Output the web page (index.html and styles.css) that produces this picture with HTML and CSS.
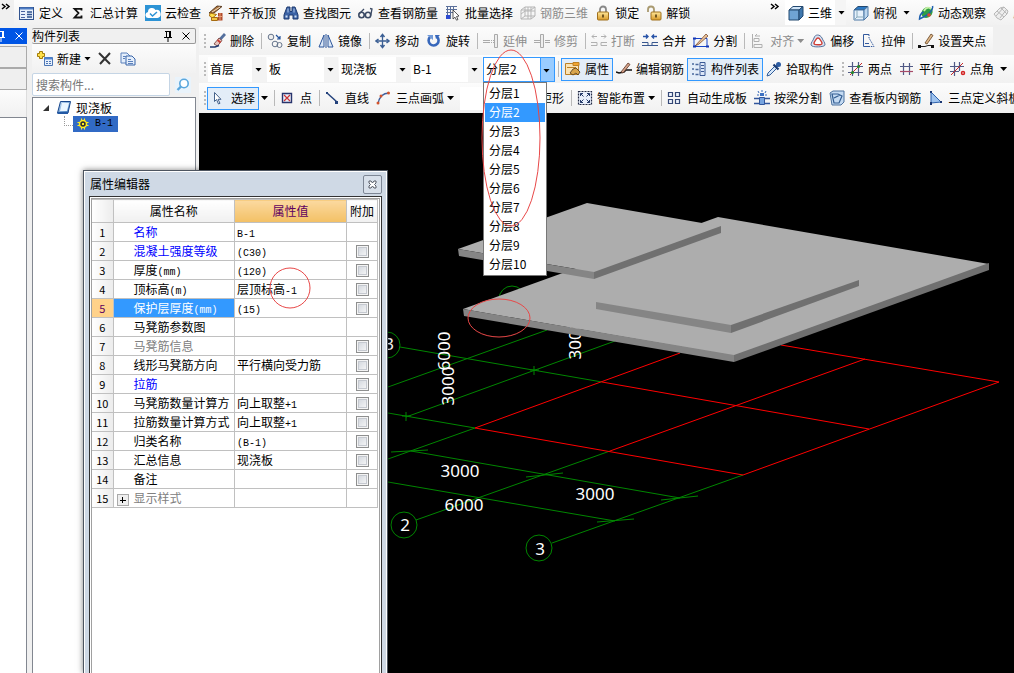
FILE: index.html
```html
<!DOCTYPE html>
<html lang="zh-CN">

<head>
  <title>现浇板 B-1</title>
  <meta charset="utf-8" />
  <meta name="viewport" content="width=device-width, initial-scale=1.0" />
  <link rel="stylesheet" href="styles.css">
</head>

<body>
  <!-- icon set, 16x16 -->
  <svg class="defs" width="0" height="0" aria-hidden="true">
    <defs>
      <linearGradient id="gblue" x1="0" y1="0" x2="1" y2="1"><stop offset="0" stop-color="#d4e8fb"/><stop offset="1" stop-color="#2f6fb5"/></linearGradient>
      <linearGradient id="ggold" x1="0" y1="0" x2="0" y2="1"><stop offset="0" stop-color="#ffe79a"/><stop offset="1" stop-color="#d99a28"/></linearGradient>
    </defs>
    <symbol id="i-define" viewBox="0 0 16 16"><rect x=".5" y="2.500" width="14" height="12" fill="#eaf1fb" stroke="#31538f"/><path d="M1 3.500h13" stroke="#4d7cc4" stroke-width="2"/><path d="M2 6.500h4M2 9.500h4M2 12.500h4" stroke="#4a62a0"/><path d="M8 7h5M8 9.500h5M8 12h5" stroke="#31538f" stroke-width="1.500"/></symbol>
    <symbol id="i-sum" viewBox="0 0 16 16"><path d="M11.500 5.500V3.800H4.500L8.500 8l-4 4.500h7V10.500" fill="none" stroke="#111" stroke-width="1.800"/></symbol>
    <symbol id="i-cloud" viewBox="0 0 16 16"><rect width="16" height="16" fill="#2c93d5"/><path d="M4 13a3 3 0 0 1-1-6 4 4 0 0 1 7.500-2A3.500 3.500 0 0 1 12.500 13z" fill="#fff"/><path d="M5 8.500l2.500 2.500L12 7" fill="none" stroke="#2c93d5" stroke-width="1.500"/></symbol>
    <symbol id="i-flush" viewBox="0 0 16 16"><path d="M1 8l8-7 5 .5L6 8z" fill="#a9713c" stroke="#5d4026"/><path d="M4 7l8-5" stroke="#f0dcc0"/><path d="M2 8l-.5 3 3 2 4-3.500z" fill="#ffe04a" stroke="#a66b10"/><path d="M3.500 12.500h6v3h-6z" fill="#f4c545" stroke="#a66b10"/><path d="M10 8h4.500v7.500H10z" fill="#b04a2a"/><path d="M12 8v7.500M10 11.500h4.500" stroke="#e7a078"/></symbol>
    <symbol id="i-find" viewBox="0 0 16 16"><path d="M4 2h3v4l1 1 1-1V2h3l3 8v4h-5v-4H6v4H1v-4z" fill="#3b62a5" stroke="#1f3b70"/><path d="M2.500 10.500h2v2h-2zM11.500 10.500h2v2h-2z" fill="#cfe0f6"/><path d="M5 3.500v4M11 3.500v4" stroke="#b8cff0"/></symbol>
    <symbol id="i-glasses" viewBox="0 0 16 16"><circle cx="3.500" cy="10" r="2.700" fill="none" stroke="#3b4a64" stroke-width="1.600"/><circle cx="10" cy="10" r="2.700" fill="none" stroke="#3b4a64" stroke-width="1.600"/><path d="M6 9.500h1.500M12.700 10.500L14 4l-2-.5M1 9l5-5" fill="none" stroke="#3b4a64" stroke-width="1.300"/></symbol>
    <symbol id="i-batch" viewBox="0 0 16 16"><path d="M1 1.500h11M1 4.500h11M1 7.500h7M2.500 1v13M5.500 1v13M8.500 1v6" stroke="#5a6f9a"/><rect x="1" y="10" width="4" height="4" fill="#2c4ad0"/><path d="M8 5l6 6-2.500.5 1.500 3-1.500.7-1.500-3L8 14z" fill="#fff" stroke="#333" stroke-width=".8"/></symbol>
    <symbol id="i-rebar3d" viewBox="0 0 16 16"><path d="M1 5l4-3v9l-4 3zM5 2h10v9H5M1 14h10l4-3M1 9l4-3h10M8 2v12M11 2v12M1 5h10l4-3" fill="none" stroke="#b5b5b5"/></symbol>
    <symbol id="i-lock" viewBox="0 0 16 16"><path d="M5 7V4.500a3 3 0 0 1 6 0V7" fill="none" stroke="#888" stroke-width="1.800"/><rect x="2.500" y="7" width="11" height="8" rx="1" fill="url(#ggold)" stroke="#a0701c"/><path d="M8 9.500v3" stroke="#513a10" stroke-width="1.600"/></symbol>
    <symbol id="i-unlock" viewBox="0 0 16 16"><path d="M2 7V4.500a3 3 0 0 1 6 0V7" fill="none" stroke="#a99a70" stroke-width="1.800"/><rect x="5" y="7" width="10" height="8" rx="1" fill="url(#ggold)" stroke="#a0701c"/><path d="M10 9.500v3" stroke="#513a10" stroke-width="1.600"/></symbol>
    <symbol id="i-cube" viewBox="0 0 16 16"><path d="M1 5l4-3.500h10L11 5z" fill="#cfe4f8" stroke="#23486f"/><path d="M1 5h10v10H1z" fill="#6fa4d4" stroke="#23486f"/><path d="M11 5l4-3.500V11l-4 4z" fill="#3f77ad" stroke="#23486f"/></symbol>
    <symbol id="i-topview" viewBox="0 0 16 16"><path d="M1 5l4-3.500h10L11 5z" fill="#2b79c4" stroke="#23486f"/><path d="M1 5h10v10H1z" fill="#e6f1fb" stroke="#4c79a6"/><path d="M11 5l4-3.500V11l-4 4z" fill="#bdd7ee" stroke="#4c79a6"/><path d="M4 5v7l-3 3M4 12h7" fill="none" stroke="#8ab"/></symbol>
    <symbol id="i-orbit" viewBox="0 0 16 16"><ellipse cx="9" cy="7.500" rx="6" ry="5" transform="rotate(-40 9 7.500)" fill="#2f9e44"/><path d="M6 6c2-4 5-4 7-2" fill="none" stroke="#c6f0a5" stroke-width="1.800"/><path d="M14.500 1c1 4-4 9-13 13 0-4 2-6 4-7" fill="none" stroke="#1d5fae" stroke-width="1.500"/><circle cx="11" cy="10" r="1.800" fill="#e0492c"/></symbol>
    <symbol id="i-local" viewBox="0 0 16 16"><path d="M1 9l6-6 4-1 4 4-1 3-6 6-4-2zM4 6l7 6M8 3l6 6M7 13l7-9M3 11l8-9" fill="#eee" stroke="#b8b8b8"/></symbol>
    <symbol id="i-erase" viewBox="0 0 16 16"><path d="M15 1L9.500 7" stroke="#54709e" stroke-width="2.800"/><path d="M9 5l3 2.500-4.500 5.500-3.500-2z" fill="#e8c4bd" stroke="#6d3a34" stroke-width=".8"/><path d="M7.500 7l3 2.500" stroke="#c93b31" stroke-width="1.800"/><path d="M0 14h5l4-1.500" fill="none" stroke="#223a70" stroke-width="1.500"/></symbol>
    <symbol id="i-copy" viewBox="0 0 16 16"><circle cx="4" cy="4" r="2.800" fill="#eee" stroke="#66758c"/><circle cx="8" cy="11" r="2.800" fill="none" stroke="#66758c"/><circle cx="12.500" cy="12" r="2.500" fill="none" stroke="#66758c"/><path d="M9 2l4 4m0-3v3h-3" fill="none" stroke="#26549c" stroke-width="1.200"/></symbol>
    <symbol id="i-mirror" viewBox="0 0 16 16"><path d="M6 2v12H1zM10 2v12h5z" fill="#dce8f7" stroke="#2d569b"/><path d="M8 1v14" stroke="#2d569b"/></symbol>
    <symbol id="i-move" viewBox="0 0 16 16"><path d="M7.500 2v12M1 8h13" stroke="#3b5f94" stroke-width="1.300"/><path d="M5.500 4l2-2.500 2 2.500M5.500 12l2 2.500 2-2.500M3.500 6L1 8l2.500 2M11.500 6L14 8l-2.500 2" fill="none" stroke="#3b5f94" stroke-width="1.500"/></symbol>
    <symbol id="i-rotate" viewBox="0 0 16 16"><path d="M4 4a5 5 0 1 0 7-.2" fill="none" stroke="#3767bb" stroke-width="2.600"/><path d="M1 2h6v5z" fill="#7099d8"/><path d="M9 2h5l-4 4z" fill="#3767bb"/></symbol>
    <symbol id="i-extend" viewBox="0 0 16 16"><path d="M0 7.500h7M0 9.500h7" stroke="#aaa"/><path d="M8 7.500h3M8 9.500h3" stroke="#aaa" stroke-dasharray="1"/><path d="M11.500 1.500h3v13h-3z" fill="#eee" stroke="#aaa"/></symbol>
    <symbol id="i-trim" viewBox="0 0 16 16"><path d="M0 7.500h6M0 9.500h6M11 7.500h5M11 9.500h5" stroke="#aaa"/><path d="M6.500 1.500h3v13h-3z" fill="#eee" stroke="#aaa"/></symbol>
    <symbol id="i-break" viewBox="0 0 16 16"><path d="M1 3.500h5M10 3.500h5M3 1.500l-2 2 2 2M13 1.500l2 2-2 2M0 9.500h6v3H0M16 9.500h-6v3h6" fill="none" stroke="#b0b0b0"/></symbol>
    <symbol id="i-merge" viewBox="0 0 16 16"><path d="M1 3.500h5M10 3.500h5M4 1.500l2 2-2 2M12 1.500l-2 2 2 2" fill="none" stroke="#2853a8" stroke-width="1.400"/><path d="M0 9.500h6v3H0M16 9.500h-6v3h6M6 12.500h4" fill="none" stroke="#39588f"/></symbol>
    <symbol id="i-split" viewBox="0 0 16 16"><path d="M1 5.500h13v8H1z" fill="none" stroke="#1745c9"/><path d="M2 13L13 1l2 2L6 11z" fill="#e9c49e" stroke="#7d4d2c" stroke-width=".8"/><path d="M0 4.500h3v2H0zM0 12.500h3v2H0zM13 12.500h3v2h-3z" fill="#1436b5"/></symbol>
    <symbol id="i-align" viewBox="0 0 16 16"><path d="M2.500 1v14M4 5.500h5v3H4zM4 11.500h8v3H4zM10 3L5 3l2-2" fill="none" stroke="#b0b0b0"/></symbol>
    <symbol id="i-offset" viewBox="0 0 16 16"><path d="M1 12c0-3 2-4 3-7 1-4 6-4 8 0 1 3 3 4 3 7 0 2-13 3-14 0z" fill="#d9e5f4" stroke="#58729b"/><path d="M4 10.500c0-2 1-2 2-4s3-2 4 0 2 2 2 4-8 1.500-8 0z" fill="#fff" stroke="#cf3d35" stroke-width="1.400"/></symbol>
    <symbol id="i-stretch" viewBox="0 0 16 16"><path d="M8 1.500H2.500v12H9" fill="none" stroke="#335a9e"/><path d="M8 1.500V5l5 8.500H9" fill="none" stroke="#335a9e" stroke-dasharray="1.500 1"/><path d="M4 10.500h4" stroke="#335a9e"/></symbol>
    <symbol id="i-grip" viewBox="0 0 16 16"><path d="M0 13.500h7l3-1h6" fill="none" stroke="#222"/><path d="M0 12h3v3H0zM13 12h3v3h-3z" fill="#111"/><path d="M7 10l6-9 2 1.500L9 11z" fill="#e0b98a" stroke="#62401f" stroke-width=".8"/></symbol>
    <symbol id="i-prop" viewBox="0 0 16 16"><path d="M.5 2.500h13v11H.5z" fill="#fbe3b4" stroke="#bd8126"/><path d="M8 1.500h6v3H8z" fill="#f2a531" stroke="#bd8126"/><path d="M2 6.500h9" stroke="#bd8126"/><path d="M5 12l3-4 3-1 4 4-2 3-2-2-3 2z" fill="#d9a54c" stroke="#4c3515" stroke-width=".8"/></symbol>
    <symbol id="i-editbar" viewBox="0 0 16 16"><path d="M0 11l3 1 5-1 2-2h6" fill="none" stroke="#111" stroke-width="1.500"/><path d="M5 11l7-9 2 1.500L7 12z" fill="#d5a28a" stroke="#5b3525" stroke-width=".8"/></symbol>
    <symbol id="i-list" viewBox="0 0 16 16"><path d="M1 3h2M1 8h2M1 13h2M4.500 3.500h3M4.500 8.500h3M4.500 13.500h3" stroke="#4a689c" stroke-width="1.500"/><path d="M9 1.500h5v13H9z" fill="#dce7f8" stroke="#3b5a96"/><path d="M10 4.500h3M10 7.500h3M10 10.500h3" stroke="#3b5a96"/></symbol>
    <symbol id="i-pick" viewBox="0 0 16 16"><path d="M9 5L2 12l-1 3 3-1 7-7z" fill="#d7e8fa" stroke="#315c98"/><path d="M7.500 3.500l5 5M10 6l3-3" stroke="#1c3c74" stroke-width="2.200"/><circle cx="12.500" cy="3.500" r="2.500" fill="#2e5da3"/></symbol>
    <symbol id="i-twopt" viewBox="0 0 16 16"><path d="M4.500 1v14M10.500 1v14M0 5.500h15M0 11.500h15" stroke="#515a86" stroke-width="1.200"/><path d="M2 14L14 2" stroke="#c82828"/><circle cx="4.500" cy="11.500" r="1.500" fill="#218d2b"/><circle cx="10.500" cy="5.500" r="1.500" fill="#218d2b"/></symbol>
    <symbol id="i-para" viewBox="0 0 16 16"><path d="M4.500 2v12M10.500 2v12M1 5.500h13" stroke="#515a86" stroke-width="1.200"/><path d="M1 10.500h13" stroke="#a84b68" stroke-width="1.200"/></symbol>
    <symbol id="i-angle" viewBox="0 0 16 16"><path d="M4.500 1v14M9.500 1v9M0 5.500h14M0 10.500h9" stroke="#515a86" stroke-width="1.200"/><path d="M1 14L13 2" stroke="#c82828"/><circle cx="13" cy="12" r="1.500" fill="none" stroke="#d32323" stroke-width="1.500"/></symbol>
    <symbol id="i-arrow" viewBox="0 0 16 16"><path d="M3.500 2.500v9l2-2 2 4.500 1.500-.7-2-4h3z" fill="#fff" stroke="#46638c"/></symbol>
    <symbol id="i-point" viewBox="0 0 16 16"><path d="M2.500 3.500h9v9h-9z" fill="#e8effc" stroke="#28346c" stroke-width="1.400"/><path d="M4 5l6 6M10 5l-6 6" stroke="#cc3434" stroke-width="1.200"/></symbol>
    <symbol id="i-line" viewBox="0 0 16 16"><path d="M2 3l10 9" stroke="#24427c" stroke-width="1.500"/><path d="M1 2h2v2H1zM10 11h3v3h-3z" fill="#24427c"/></symbol>
    <symbol id="i-arc" viewBox="0 0 16 16"><path d="M2 14C3 8 6 3 13 3" fill="none" stroke="#3e5f9d" stroke-width="1.300"/><circle cx="2" cy="13" r="1.500" fill="#d2542d"/><circle cx="5" cy="6" r="1.500" fill="#d2542d"/><circle cx="12.500" cy="3" r="1.500" fill="#d2542d"/></symbol>
    <symbol id="i-rect" viewBox="0 0 16 16"><path d="M2 4h12v8H2z" fill="#e8effc" stroke="#28346c"/></symbol>
    <symbol id="i-smart" viewBox="0 0 16 16"><path d="M1.500 1.500h13v13h-13z" fill="#e8effc" stroke="#222a44" stroke-width="1.200" stroke-dasharray="2 1"/><path d="M6.500 6.500l-3-3M9.500 6.500l3-3M6.500 9.500l-3 3M9.500 9.500l3 3M3.500 6V3.500H6M10 3.500h2.500V6M3.500 10v2.500H6M10 12.500h2.500V10" fill="none" stroke="#233968"/></symbol>
    <symbol id="i-autoslab" viewBox="0 0 16 16"><path d="M1.500 2.500h4v4h-4zM8.500 2.500h4v4h-4zM1.500 9.500h4v4h-4zM8.500 9.500h4v4h-4z" fill="#edf3fd" stroke="#334675" stroke-width="1.200"/></symbol>
    <symbol id="i-beam" viewBox="0 0 16 16"><path d="M0 8.500h6M10 8.500h6M0 13.500h6M10 13.500h6" stroke="#31569c" stroke-width="1.500"/><path d="M5.500 7.500h5v7h-5z" fill="#77a4df" stroke="#31569c"/><path d="M8 0v2M4 1l1 2M12 1l-1 2M3 5h2M11 5h2" stroke="#3769b9"/><path d="M6 3h4v3H6z" fill="#3d71c2"/></symbol>
    <symbol id="i-viewbar" viewBox="0 0 16 16"><path d="M1 3l3-2h11v11l-3 3H3z" fill="#c4daf2" stroke="#4b719e"/><path d="M3 4l2 9h5l3-7-4-2zM5 8l6-3" fill="none" stroke="#335d91" stroke-width="1.200"/></symbol>
    <symbol id="i-slope" viewBox="0 0 16 16"><path d="M3 2v11l10-1z" fill="#9fc3ee" stroke="#2d62ad"/><path d="M2 1h2v2H2zM2 12h2v3H2zM12 11h2v2h-2z" fill="#1b3773"/></symbol>
    <symbol id="i-new" viewBox="0 0 16 16"><path d="M2.500.5h3v2h2v3h-2v2h-3v-2h-2v-3h2z" fill="#ffe04a" stroke="#a37c0a"/><path d="M7.500 6.500h8v8h-8z" fill="#e7f0fc" stroke="#4d76b4"/><path d="M7.500 7.500h8" stroke="#4d82d1" stroke-width="2"/><path d="M9 10.500h2M12 10.500h2M9 12.500h2M12 12.500h2" stroke="#4d76b4"/></symbol>
    <symbol id="i-del" viewBox="0 0 16 16"><path d="M2 2l11 11M13 2L3 13" stroke="#333" stroke-width="2"/></symbol>
    <symbol id="i-dup" viewBox="0 0 16 16"><path d="M1 2h6l3 3v7H1z" fill="#e4eefb" stroke="#5b80bb"/><path d="M6 5h6l3 3v6H6z" fill="#e4eefb" stroke="#3864a8"/><path d="M8 8.500h3M8 10.500h5M8 12.500h5M3 5.500h3M3 7.500h2" stroke="#5b80bb"/></symbol>
    <symbol id="i-search" viewBox="0 0 16 16"><rect width="16" height="16" fill="#e9f3fb"/><circle cx="9" cy="6.500" r="4.200" fill="#fff" stroke="#5aa7dd" stroke-width="1.600"/><path d="M6 9.500L2.500 13" stroke="#5aa7dd" stroke-width="2.400"/></symbol>
    <symbol id="i-slab" viewBox="0 0 16 16"><path d="M4.500 1.500h10L12 13H1.500z" fill="url(#gblue)" stroke="#16458c"/><path d="M6 3h7l-2 8H4z" fill="#e9f5ff"/><path d="M1.500 12h10.500v2H1.500z" fill="#2459a4"/></symbol>
    <symbol id="i-gear" viewBox="0 0 16 16"><path d="M6.500 2.500v11M9.500 2.500v11M2.500 6.500h11M2.500 9.500h11" stroke="#ffee21"/><circle cx="8" cy="8" r="3.500" fill="#333" stroke="#ffee21" stroke-width="1.500"/><path d="M7 7h2v2H7z" fill="#ffee21"/></symbol>
    <symbol id="i-pin" viewBox="0 0 16 16"><path d="M5 3.500h6M6.500 3v6M9.500 3v6M10.500 3v6M4 9.500h8M8 10v4" stroke="currentColor"/></symbol>
    <symbol id="i-x" viewBox="0 0 16 16"><path d="M4.500 4.500l7 7M11.500 4.500l-7 7" stroke="currentColor"/></symbol>
    <symbol id="i-more" viewBox="0 0 16 16"><path d="M4 4l3 2.500L4 9M8 4l3 2.500L8 9" fill="none" stroke="#000" stroke-width="1.500"/></symbol>
  </svg>

  <header class="topbar">
    <div class="edge"><svg><use href="#i-more"/></svg></div>
    <div class="bar">
      <button class="tool"><svg><use href="#i-define"/></svg>定义</button>
      <button class="tool"><svg><use href="#i-sum"/></svg>汇总计算</button>
      <button class="tool"><svg><use href="#i-cloud"/></svg>云检查</button>
      <button class="tool"><svg><use href="#i-flush"/></svg>平齐板顶</button>
      <button class="tool"><svg><use href="#i-find"/></svg>查找图元</button>
      <button class="tool"><svg><use href="#i-glasses"/></svg>查看钢筋量</button>
      <button class="tool"><svg><use href="#i-batch"/></svg>批量选择</button>
      <button class="tool" disabled><svg><use href="#i-rebar3d"/></svg>钢筋三维</button>
      <button class="tool"><svg><use href="#i-lock"/></svg>锁定</button>
      <button class="tool"><svg><use href="#i-unlock"/></svg>解锁</button>
      <svg class="more"><use href="#i-more"/></svg>
    </div>
    <div class="bar views">
      <button class="tool split lit"><svg><use href="#i-cube"/></svg>三维<i class="caret"></i></button>
      <button class="tool split"><svg><use href="#i-topview"/></svg>俯视<i class="caret"></i></button>
      <button class="tool"><svg><use href="#i-orbit"/></svg>动态观察</button>
      <button class="tool" disabled><svg><use href="#i-local"/></svg>局</button>
    </div>
  </header>

  <div class="work">
    <aside class="strip">
      <div class="strip-head"><svg><use href="#i-pin"/></svg><svg><use href="#i-x"/></svg></div>
      <div class="strip-cell"></div>
      <div class="strip-cell"></div>
      <div class="strip-tools"></div>
      <div class="strip-body"></div>
    </aside>

    <aside class="parts">
      <div class="parts-head"><span>构件列表</span><svg><use href="#i-pin"/></svg><svg><use href="#i-x"/></svg></div>
      <div class="parts-tools">
        <button class="tool"><svg><use href="#i-new"/></svg>新建<i class="caret"></i></button>
        <button class="tool" aria-label="删除"><svg><use href="#i-del"/></svg></button>
        <button class="tool" aria-label="复制"><svg><use href="#i-dup"/></svg></button>
      </div>
      <div class="search">
        <input type="text" placeholder="搜索构件..." aria-label="搜索构件">
        <button aria-label="搜索"><svg><use href="#i-search"/></svg></button>
      </div>
      <div class="tree">
        <div class="node"><i class="twist"></i><svg><use href="#i-slab"/></svg><span>现浇板</span></div>
        <div class="leaf"><i class="branch"></i><div class="picked"><svg><use href="#i-gear"/></svg><span class="lat">B-1</span></div></div>
      </div>
    </aside>

    <main class="main">
      <div class="row">
        <div class="bar">
          <i class="grip"></i>
          <button class="tool"><svg><use href="#i-erase"/></svg>删除</button>
          <i class="sep"></i>
          <button class="tool"><svg><use href="#i-copy"/></svg>复制</button>
          <button class="tool"><svg><use href="#i-mirror"/></svg>镜像</button>
          <i class="sep"></i>
          <button class="tool"><svg><use href="#i-move"/></svg>移动</button>
          <button class="tool"><svg><use href="#i-rotate"/></svg>旋转</button>
          <i class="sep"></i>
          <button class="tool" disabled><svg><use href="#i-extend"/></svg>延伸</button>
          <button class="tool" disabled><svg><use href="#i-trim"/></svg>修剪</button>
          <i class="sep"></i>
          <button class="tool" disabled><svg><use href="#i-break"/></svg>打断</button>
          <button class="tool"><svg><use href="#i-merge"/></svg>合并</button>
          <button class="tool"><svg><use href="#i-split"/></svg>分割</button>
          <i class="sep"></i>
          <button class="tool" disabled><svg><use href="#i-align"/></svg>对齐<i class="caret"></i></button>
          <button class="tool"><svg><use href="#i-offset"/></svg>偏移</button>
          <button class="tool"><svg><use href="#i-stretch"/></svg>拉伸</button>
          <i class="sep"></i>
          <button class="tool"><svg><use href="#i-grip"/></svg>设置夹点</button>
        </div>
      </div>
      <div class="row">
        <div class="bar">
          <i class="grip"></i>
          <div class="combos">
            <label class="combo floor"><select aria-label="楼层"><option>首层</option></select></label>
            <label class="combo"><select aria-label="构件类别"><option>板</option></select></label>
            <label class="combo"><select aria-label="构件类型"><option>现浇板</option></select></label>
            <label class="combo"><select aria-label="构件"><option>B-1</option></select></label>
            <div class="layer">
              <label class="combo open"><select aria-label="分层"><option>分层2</option></select></label>
              <ul class="drop" role="listbox" aria-label="分层">
                <li role="option">分层1</li>
                <li role="option" class="on" aria-selected="true">分层2</li>
                <li role="option">分层3</li>
                <li role="option">分层4</li>
                <li role="option">分层5</li>
                <li role="option">分层6</li>
                <li role="option">分层7</li>
                <li role="option">分层8</li>
                <li role="option">分层9</li>
                <li role="option">分层10</li>
              </ul>
            </div>
          </div>
          <i class="sep tight"></i>
          <button class="tool down"><svg><use href="#i-prop"/></svg>属性</button>
          <button class="tool near"><svg><use href="#i-editbar"/></svg>编辑钢筋</button>
          <button class="tool down"><svg><use href="#i-list"/></svg>构件列表</button>
          <button class="tool near"><svg><use href="#i-pick"/></svg>拾取构件</button>
        </div>
        <div class="bar">
          <i class="grip"></i>
          <button class="tool"><svg><use href="#i-twopt"/></svg>两点</button>
          <button class="tool"><svg><use href="#i-para"/></svg>平行</button>
          <button class="tool split"><svg><use href="#i-angle"/></svg>点角<i class="caret"></i></button>
        </div>
      </div>
      <div class="row last">
        <div class="bar">
          <i class="grip"></i>
          <button class="tool down"><svg><use href="#i-arrow"/></svg>选择</button><i class="caret alone"></i>
          <i class="sep"></i>
          <button class="tool"><svg><use href="#i-point"/></svg>点</button>
          <i class="sep"></i>
          <button class="tool"><svg><use href="#i-line"/></svg>直线</button>
          <button class="tool"><svg><use href="#i-arc"/></svg>三点画弧<i class="caret"></i></button>
          <label class="combo arc"><select aria-label="画弧方式"><option></option></select></label>
          <button class="tool"><svg><use href="#i-rect"/></svg>矩形</button>
          <i class="sep"></i>
          <button class="tool"><svg><use href="#i-smart"/></svg>智能布置<i class="caret"></i></button>
          <i class="sep"></i>
          <button class="tool"><svg><use href="#i-autoslab"/></svg>自动生成板</button>
          <button class="tool"><svg><use href="#i-beam"/></svg>按梁分割</button>
          <button class="tool"><svg><use href="#i-viewbar"/></svg>查看板内钢筋</button>
          <button class="tool"><svg><use href="#i-slope"/></svg>三点定义斜板</button>
        </div>
      </div>

      <div class="view">
        <svg viewBox="199 113 815 560" preserveAspectRatio="xMinYMin slice" role="img" aria-label="三维视图">
          <g class="axis">
            <path d="M400 347L602 382M388 387L547 330M406 417L615 341M388 413L475 428M388 459L475 428"/>
            <path d="M411 451L680 498M388 482L615 521M416 520L610 451M552 543L743 475"/>
            <path d="M391 452L428 450M526 477L563 473M661 500L698 496M597 522L634 519"/>
            <path d="M534 366v9M530 370h9M406 412v9M402 416h9"/>
            <circle cx="387" cy="345" r="13"/>
            <circle cx="512" cy="299" r="13"/>
            <circle cx="404" cy="525" r="13"/>
            <circle cx="539" cy="548" r="13"/>
          </g>
          <path class="grid" d="M475 428L680 353M610 451L865 359M743 475L999 382L781 345M475 428L743 475M602 382L869 429"/>
          <g class="dims">
            <text x="460" y="477">3000</text>
            <text x="464" y="511">6000</text>
            <text x="595" y="500">3000</text>
            <text transform="translate(454 386) rotate(-90)">3000</text>
            <text transform="translate(450 351) rotate(-90)">6000</text>
            <text transform="translate(581 340) rotate(-90)">3000</text>
            <text x="389" y="350">3</text>
            <text x="405" y="531">2</text>
            <text x="540" y="555">3</text>
          </g>
          <g class="slab">
            <path class="top" d="M463 309L718 217L989 264L734 356z"/>
            <path class="front" d="M463 309L734 355V362L464 316z"/>
            <path class="side" d="M734 355L989 263V270L734 362z"/>
            <path class="front" d="M596 302L731 325V333L596 309z"/>
            <path class="side" d="M731 325L859 280V286L731 333z"/>
            <path class="top" d="M458 249L587 203L702 223L721 227L594 272z"/>
            <path class="front" d="M458 249L594 272V279L459 256z"/>
            <path class="side" d="M594 272L721 226V233L594 279z"/>
          </g>
        </svg>
      </div>
    </main>
  </div>

  <section class="dialog" aria-label="属性编辑器">
    <div class="dialog-head"><h2>属性编辑器</h2><button aria-label="关闭"><svg viewBox="0 0 9 9"><path d="M1 1h2l1.500 2L6 1h2v2L6.500 4.500 8 6v2H6L4.500 6 3 8H1V6l1.500-1.500L1 3z" fill="#fff" stroke="#555b66"/></svg></button></div>
    <div class="dialog-body">
      <table>
        <thead>
          <tr><th class="num"></th><th>属性名称</th><th class="val">属性值</th><th class="add">附加</th></tr>
        </thead>
        <tbody>
          <tr><th>1</th><td class="blue">名称</td><td><span class="lat">B-1</span></td><td></td></tr>
          <tr><th>2</th><td class="blue">混凝土强度等级</td><td><span class="lat">(C30)</span></td><td><input type="checkbox" aria-label="混凝土强度等级"></td></tr>
          <tr><th>3</th><td>厚度<span class="lat">(mm)</span></td><td><span class="lat">(120)</span></td><td><input type="checkbox" aria-label="厚度"></td></tr>
          <tr><th>4</th><td>顶标高<span class="lat">(m)</span></td><td>层顶标高<span class="lat">-1</span></td><td><input type="checkbox" aria-label="顶标高"></td></tr>
          <tr class="current"><th>5</th><td>保护层厚度<span class="lat">(mm)</span></td><td><span class="lat">(15)</span></td><td><input type="checkbox" aria-label="保护层厚度"></td></tr>
          <tr><th>6</th><td>马凳筋参数图</td><td></td><td></td></tr>
          <tr><th>7</th><td class="dim">马凳筋信息</td><td></td><td><input type="checkbox" aria-label="马凳筋信息"></td></tr>
          <tr><th>8</th><td>线形马凳筋方向</td><td>平行横向受力筋</td><td><input type="checkbox" aria-label="线形马凳筋方向"></td></tr>
          <tr><th>9</th><td class="blue">拉筋</td><td></td><td><input type="checkbox" aria-label="拉筋"></td></tr>
          <tr><th>10</th><td>马凳筋数量计算方</td><td>向上取整<span class="lat">+1</span></td><td><input type="checkbox" aria-label="马凳筋数量计算方式"></td></tr>
          <tr><th>11</th><td>拉筋数量计算方式</td><td>向上取整<span class="lat">+1</span></td><td><input type="checkbox" aria-label="拉筋数量计算方式"></td></tr>
          <tr><th>12</th><td>归类名称</td><td><span class="lat">(B-1)</span></td><td><input type="checkbox" aria-label="归类名称"></td></tr>
          <tr><th>13</th><td>汇总信息</td><td>现浇板</td><td><input type="checkbox" aria-label="汇总信息"></td></tr>
          <tr><th>14</th><td>备注</td><td></td><td><input type="checkbox" aria-label="备注"></td></tr>
          <tr><th>15</th><td class="dim group"><button class="plus" aria-label="展开"></button>显示样式</td><td></td><td></td></tr>
        </tbody>
      </table>
    </div>
  </section>

  <!-- red review marks -->
  <svg class="marks" width="1014" height="673" aria-hidden="true">
    <ellipse cx="511" cy="138" rx="29" ry="88"/>
    <ellipse cx="499" cy="318" rx="31" ry="19"/>
    <circle cx="290" cy="288" r="20"/>
  </svg>
</body>

</html>
```

FILE: styles.css
```css
* {
  box-sizing: border-box;
}
body {
  margin: 0;
  height: 100vh;
  display: flex;
  flex-direction: column;
  overflow: hidden;
  position: relative;
  background: #f0f0f0;
  color: #000;
  font: 12px/16px "Noto Sans CJK SC", sans-serif;
}
button,
input,
select {
  font: inherit;
  color: inherit;
}
svg {
  display: block;
  flex: none;
}
.defs {
  position: absolute;
}
.lat {
  font: 10px/10px "Liberation Mono", monospace;
}

/* toolbars */
.topbar {
  height: 27px;
  flex: none;
  display: flex;
  padding-bottom: 2px;
}
.edge {
  width: 14px;
}
.edge svg,
.more {
  width: 16px;
  height: 16px;
}
.edge svg {
  margin-left: -2px;
}
.bar {
  display: flex;
  align-items: center;
  background: linear-gradient(#fcfcfc, #f1f1f1);
}
.topbar .bar {
  flex: 1;
  padding-left: 5px;
}
.topbar .views {
  flex: 0 1 229px;
  min-width: 0;
  padding-left: 0;
  overflow: hidden;
}
.topbar .more {
  margin: 0 2px 10px auto;
}
.tool {
  display: flex;
  align-items: center;
  gap: 4px;
  flex: none;
  margin: 0 7px 0 0;
  padding: 0;
  border: 0;
  background: none;
  white-space: nowrap;
}
.tool svg,
.parts svg,
.strip svg {
  width: 16px;
  height: 16px;
}
.tool:disabled {
  color: #8c8c8c;
}
.tool.down {
  height: 23px;
  padding: 0 3px;
  border: 1px solid #3399ff;
  background: #e3edf8;
  margin-right: 3px;
}
.tool.near {
  margin-right: 3px;
}
.tool.lit {
  height: 25px;
  padding-left: 3px;
  background: linear-gradient(90deg, #fff 50px, #f5f5f5 50px);
}
.caret {
  width: 7px;
  height: 4px;
  flex: none;
  margin: 0 -1px;
  background: currentColor;
  clip-path: polygon(0 0, 100% 0, 50% 100%);
}
.split .caret {
  margin: 0 1px 0 2px;
}
.caret.alone {
  margin: 0 6px 0 -1px;
}
.sep {
  width: 1px;
  height: 16px;
  flex: none;
  margin-right: 5px;
  background: #b9b9b9;
}
.sep.tight {
  margin: 0 2px 0 3px;
}
.grip {
  width: 2px;
  height: 15px;
  flex: none;
  margin: 0 4px 0 5px;
  background: repeating-linear-gradient(#bbb 0 2px, transparent 2px 4px);
}
.row {
  display: flex;
  height: 28px;
}
.row.last {
  height: 30px;
}
.row.last .bar {
  flex: 1;
  min-width: 0;
}
.row.last .grip {
  margin-right: 1px;
}
.combos {
  display: flex;
  gap: 1px;
  margin-left: -2px;
}
.combo {
  position: relative;
  display: block;
  flex: none;
  width: 71px;
  height: 25px;
  background: linear-gradient(90deg, #fff calc(100% - 14px), #f3f3f3 0);
}
.combo.floor {
  width: 58px;
}
.combo.arc {
  width: 56px;
  height: 23px;
  margin-right: 4px;
}
.combo select {
  display: block;
  width: 100%;
  height: 100%;
  padding: 0 2px;
  border: 0;
  background: none;
  appearance: none;
}
.combo::after {
  content: "";
  position: absolute;
  right: 4px;
  top: 11px;
  width: 7px;
  height: 4px;
  background: #000;
  clip-path: polygon(0 0, 100% 0, 50% 100%);
}
.layer {
  position: relative;
}
.combo.open {
  width: 72px;
  border: 1px solid #3399ff;
  background: linear-gradient(90deg, #fff calc(100% - 14px), #3399ff 0, #3399ff calc(100% - 13px), #99ccff 0);
}
.drop {
  position: absolute;
  z-index: 2;
  left: 0;
  top: 25px;
  width: 64px;
  margin: 0;
  padding: 1px;
  border: 1px solid #777;
  background: #fff;
  list-style: none;
}
.drop li {
  height: 19px;
  padding-left: 4px;
  line-height: 18px;
}
.drop .on {
  background: #3399ff;
  color: #fff;
}

/* docked panels */
.work {
  flex: 1;
  min-height: 0;
  display: flex;
}
.strip {
  width: 27px;
  flex: none;
  display: flex;
  flex-direction: column;
}
.strip-head {
  height: 16px;
  margin: 1px 0 2px;
  display: flex;
  justify-content: flex-end;
  gap: 2px;
  background: #0055e5;
  color: #fff;
}
.strip-cell {
  height: 22px;
  border: 1px solid #aaa;
  border-left: 0;
  background: #efefef;
}
.strip-tools {
  height: 27px;
  border-right: 1px solid #ddd;
  background: linear-gradient(#fcfcfc, #f1f1f1);
}
.strip-body {
  flex: 1;
  border: 1px solid #828790;
  border-width: 1px 1px 0 0;
  background: #fff;
}
.parts {
  width: 164px;
  flex: none;
  margin: 1px 3px 0 5px;
  display: flex;
  flex-direction: column;
}
.parts-head {
  height: 16px;
  display: flex;
  align-items: center;
  gap: 2px;
  border: 1px solid #9a9a9a;
  border-left: 0;
  border-radius: 2px;
  padding-right: 1px;
}
.parts-head span {
  flex: 1;
}
.parts-tools {
  display: flex;
  height: 29px;
  padding-left: 5px;
  background: linear-gradient(#fcfcfc, #f1f1f1);
}
.search {
  display: flex;
  height: 23px;
  margin-bottom: 1px;
}
.search input {
  width: 138px;
  min-width: 0;
  padding: 0 3px;
  border: 1px solid #c5d5e5;
  border-radius: 2px;
  background: #fff;
}
.search input::placeholder {
  color: #777;
}
.search button {
  flex: 1;
  display: grid;
  place-items: center;
  padding: 0;
  border: 0;
  background: none;
}
.tree {
  flex: 1;
  border: 1px solid #828790;
  border-bottom: 0;
  background: #fff;
  padding: 2px 0 0 10px;
}
.node,
.leaf {
  display: flex;
  align-items: center;
  height: 16px;
}
.twist {
  width: 6px;
  height: 6px;
  background: #333;
  clip-path: polygon(100% 0, 100% 100%, 0 100%);
  margin-right: 7px;
}
.node span {
  margin-left: 4px;
}
.branch {
  width: 9px;
  height: 10px;
  margin: 0 0 6px 21px;
  border: 1px dotted #999;
  border-width: 0 0 1px 1px;
}
.picked {
  display: flex;
  align-items: center;
  gap: 4px;
  padding: 0 5px 0 2px;
  background: #316ac5;
}

/* model view */
.main {
  flex: 1;
  min-width: 0;
  display: flex;
  flex-direction: column;
}
.view {
  flex: 1;
  min-height: 0;
  background: #000;
}
.view svg {
  width: 100%;
  height: 100%;
}
.axis {
  fill: none;
  stroke: #008600;
}
.grid {
  fill: none;
  stroke: #f00;
}
.dims {
  fill: #fff;
  font: 17px "Noto Sans", sans-serif;
  text-anchor: middle;
}
.top {
  fill: #adadad;
}
.front {
  fill: #858585;
}
.side {
  fill: #707070;
}

/* property editor window */
.dialog {
  position: absolute;
  z-index: 3;
  left: 83px;
  top: 170px;
  bottom: 0;
  width: 305px;
  display: flex;
  flex-direction: column;
  border: 1px solid #4d5560;
  border-bottom: 0;
  box-shadow: inset 1px 1px #fff, inset -1px 0 #fff, 0 0 6px rgba(0, 0, 0, .5);
  background: #cfd9e5;
  padding: 0 5px;
}
.dialog-head {
  display: flex;
  align-items: center;
  justify-content: space-between;
  height: 25px;
  padding: 1px 0 0 1px;
}
.dialog-head h2 {
  margin: 0;
  font: inherit;
}
.dialog-head button {
  width: 19px;
  height: 19px;
  display: grid;
  place-items: center;
  padding: 0;
  border: 1px solid #7e8795;
  border-radius: 2px;
  background: #d8e0ea;
}
.dialog-head button svg {
  width: 9px;
  height: 9px;
}
.dialog-body {
  flex: 1;
  border: 1px solid #333;
  border-bottom: 0;
  box-shadow: inset 1px 1px #fff, inset -1px 0 #fff, inset 2px 2px #a0a0a0, inset -2px 0 #a0a0a0;
  background: #fff;
  padding: 2px;
}
table {
  width: 286px;
  border-collapse: collapse;
  table-layout: fixed;
}
th,
td {
  height: 19px;
  padding: 0 0 0 2px;
  border: 1px solid #c0c0c0;
  font-weight: normal;
  line-height: 16px;
  white-space: nowrap;
}
thead th {
  height: 23px;
  padding: 0;
  background: linear-gradient(#fff, #f0f0f0);
}
th:first-child {
  border-left: 0;
  padding: 0;
  text-align: center;
  background: linear-gradient(90deg, #fff, #ececec);
}
tbody th {
  font-size: 11px;
}
.num {
  width: 21px;
}
thead .val {
  width: 112px;
  background: linear-gradient(#fbd9a0, #f3c064);
  color: #600060;
}
.add {
  width: 31px;
}
td:nth-child(2) {
  padding-left: 20px;
}
td:last-child {
  padding: 0;
}
.blue {
  color: #00f;
}
.dim {
  color: #808080;
}
.current td:nth-child(2) {
  background: #3399ff;
  color: #fff;
}
.current th:first-child {
  background: #ffd28a;
  color: #600060;
}
td input {
  display: block;
  width: 13px;
  height: 13px;
  margin: 0 auto;
  appearance: none;
  border: 1px solid #8e8f8f;
  background: linear-gradient(135deg, #cdd2da, #fbfbfb);
  box-shadow: inset 0 0 0 1px #f4f4f4, inset 0 0 0 2px #c5c9d0;
}
td.group:nth-child(2) {
  padding-left: 3px;
}
.plus {
  width: 12px;
  height: 12px;
  padding: 0;
  margin: 0 5px 0 0;
  vertical-align: -2px;
  border: 1px solid #aaa;
  background: linear-gradient(#000, #000) center / 6px 1px no-repeat, linear-gradient(#000, #000) center / 1px 6px no-repeat, #eee;
}
.picked .lat {
  color: #000;
}

.marks {
  position: absolute;
  z-index: 4;
  left: 0;
  top: 0;
  fill: none;
  stroke: #e84848;
  pointer-events: none;
}
```
